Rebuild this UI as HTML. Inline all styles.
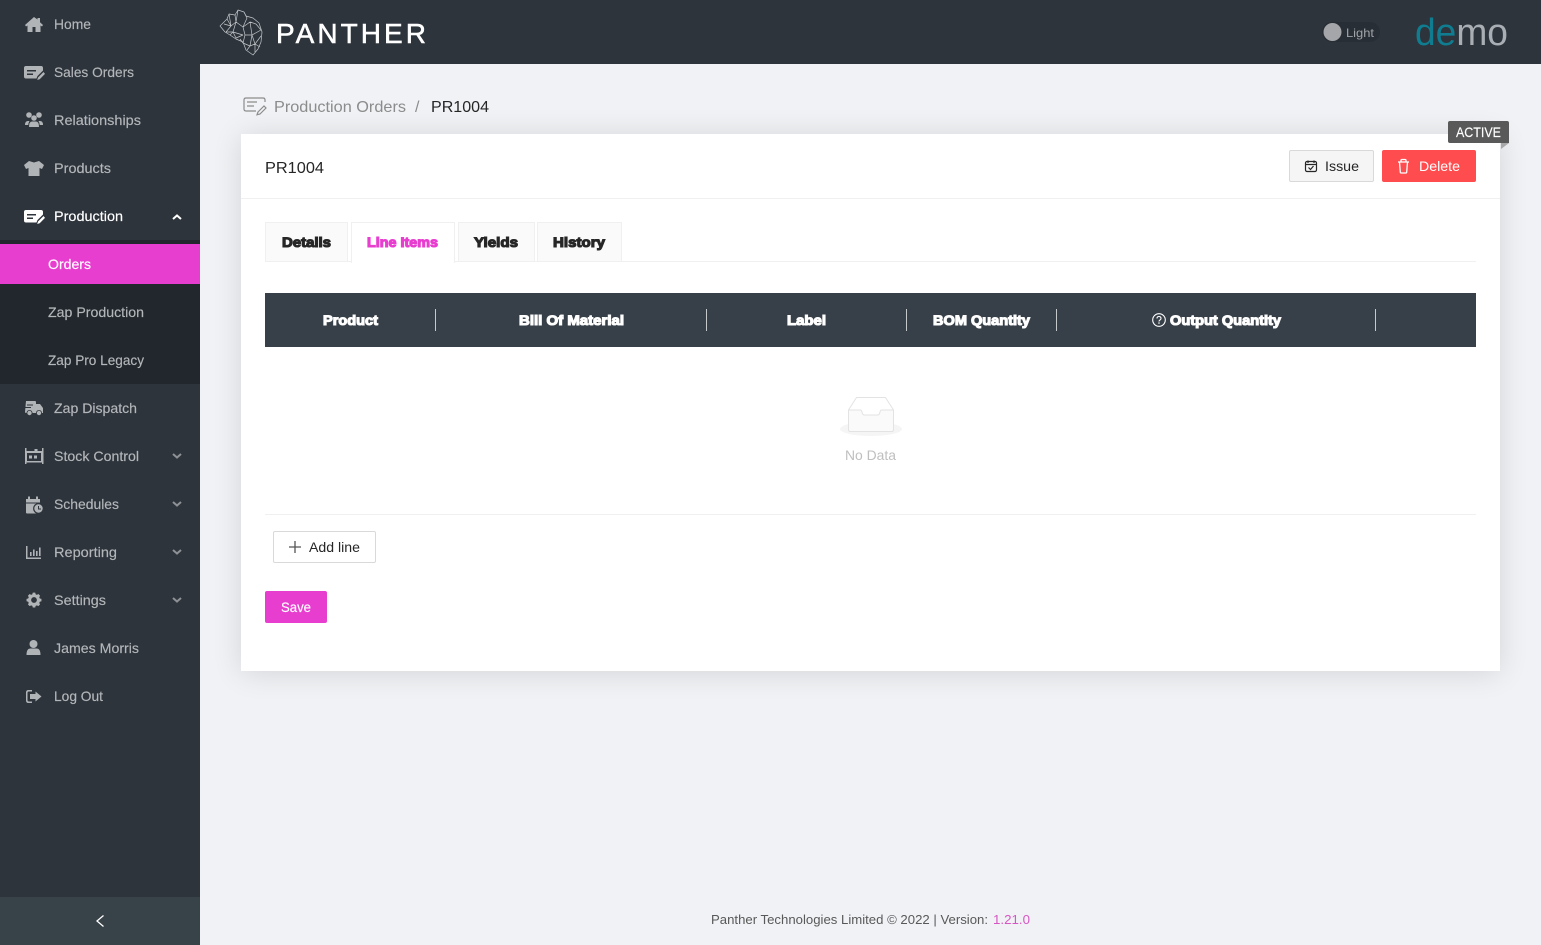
<!DOCTYPE html>
<html lang="en"><head><meta charset="utf-8"><title>PR1004</title>
<style>
html,body{margin:0;padding:0;width:1541px;height:945px;overflow:hidden;background:#f0f2f5;font-family:"Liberation Sans",sans-serif}
.a{position:absolute;box-sizing:border-box}
svg{position:absolute;left:0;top:0}
text{font-family:"Liberation Sans",sans-serif;font-size:14px}
.n{fill:#b4b7ba;stroke:#b4b7ba;stroke-width:.15px}
.h{font-weight:bold;stroke-width:1.1px;stroke:currentColor;paint-order:stroke}
</style></head><body>
<div class="a" style="left:0;top:0;width:200px;height:945px;background:#2d343c"></div>
<div class="a" style="left:0;top:240px;width:200px;height:144px;background:#21272d"></div>
<div class="a" style="left:0;top:244px;width:200px;height:40px;background:#e83ed0"></div>
<div class="a" style="left:0;top:897px;width:200px;height:48px;background:#384249"></div>
<div class="a" style="left:200px;top:0;width:1341px;height:64px;background:#2d343c"></div>
<div class="a" style="left:1322px;top:22px;width:58px;height:20px;border-radius:10px;background:#282e35"></div>
<div class="a" style="left:241px;top:134px;width:1259px;height:537px;background:#fff;box-shadow:0 2px 28px rgba(0,0,0,.12)"></div>
<div class="a" style="left:241px;top:198px;width:1259px;height:1px;background:#f0f0f0"></div>
<div class="a" style="left:1289px;top:150px;width:85px;height:32px;background:#f5f5f5;border:1px solid #d9d9d9;border-radius:2px"></div>
<div class="a" style="left:1382px;top:150px;width:94px;height:32px;background:#ff4d4f;border-radius:2px"></div>
<div class="a" style="left:1448px;top:121px;width:61px;height:22px;background:#595959;border-radius:2px 2px 0 2px"></div>
<div class="a" style="left:265px;top:261px;width:1211px;height:1px;background:#f0f0f0"></div>
<div class="a" style="left:265px;top:222px;width:83px;height:40px;background:#fafafa;border:1px solid #f0f0f0"></div>
<div class="a" style="left:351px;top:222px;width:104px;height:41px;background:#fff;border:1px solid #f0f0f0;border-bottom:0"></div>
<div class="a" style="left:458px;top:222px;width:77px;height:40px;background:#fafafa;border:1px solid #f0f0f0"></div>
<div class="a" style="left:537px;top:222px;width:85px;height:40px;background:#fafafa;border:1px solid #f0f0f0"></div>
<div class="a" style="left:265px;top:293px;width:1211px;height:54px;background:#374048"></div>
<div class="a" style="left:265px;top:514px;width:1211px;height:1px;background:#f0f0f0"></div>
<div class="a" style="left:273px;top:531px;width:103px;height:32px;background:#fff;border:1px solid #d9d9d9;border-radius:2px"></div>
<div class="a" style="left:265px;top:591px;width:62px;height:32px;background:#e83ed0;border-radius:2px"></div>
<svg width="1541" height="945" viewBox="0 0 1541 945" xmlns="http://www.w3.org/2000/svg">
<!-- Sidebar text -->
<text class="n" x="54" y="29" textLength="37" lengthAdjust="spacingAndGlyphs">Home</text>
<text class="n" x="54" y="77" textLength="80" lengthAdjust="spacingAndGlyphs">Sales Orders</text>
<text class="n" x="54" y="125" textLength="87" lengthAdjust="spacingAndGlyphs">Relationships</text>
<text class="n" x="54" y="173" textLength="57" lengthAdjust="spacingAndGlyphs">Products</text>
<text fill="#fff" stroke="#fff" stroke-width=".15" x="54" y="221" textLength="69" lengthAdjust="spacingAndGlyphs">Production</text>
<text fill="#fff" stroke="#fff" stroke-width=".15" x="48" y="269" textLength="43" lengthAdjust="spacingAndGlyphs">Orders</text>
<text class="n" x="48" y="317" textLength="96" lengthAdjust="spacingAndGlyphs">Zap Production</text>
<text class="n" x="48" y="365" textLength="96" lengthAdjust="spacingAndGlyphs">Zap Pro Legacy</text>
<text class="n" x="54" y="413" textLength="83" lengthAdjust="spacingAndGlyphs">Zap Dispatch</text>
<text class="n" x="54" y="461" textLength="85" lengthAdjust="spacingAndGlyphs">Stock Control</text>
<text class="n" x="54" y="509" textLength="65" lengthAdjust="spacingAndGlyphs">Schedules</text>
<text class="n" x="54" y="557" textLength="63" lengthAdjust="spacingAndGlyphs">Reporting</text>
<text class="n" x="54" y="605" textLength="52" lengthAdjust="spacingAndGlyphs">Settings</text>
<text class="n" x="54" y="653" textLength="85" lengthAdjust="spacingAndGlyphs">James Morris</text>
<text class="n" x="54" y="701" textLength="49" lengthAdjust="spacingAndGlyphs">Log Out</text>
<!-- Sidebar icons -->
<g fill="#b1b4b7">
<path d="M34 17l-9 8 1 1.500 1.500-1V32h5v-5h3v5h5v-6.500l1.500 1 1-1.500-3-2.700V18h-2.500v1.500z"/>
<path id="so" d="M26 66h15q2 0 2 2v2.500l-5.500 5.500-1 2.500H26q-2 0-2-2v-8.500q0-2 2-2zM27 70v1.500h9V70zM27 73.500V75h6v-1.500zM43.500 72l-5.500 5.500-.8 2.500 2.500-.8 5.300-5.300z" fill-rule="evenodd"/>
<circle cx="29" cy="115" r="2.800"/><circle cx="39" cy="115" r="2.800"/><circle cx="34" cy="118" r="2.800"/>
<path d="M25 125q0-4 3-4h1.500q-1 1.500-1.200 4zM43 125q0-4-3-4h-1.500q1 1.500 1.200 4zM29 127q0-5.500 3-5.500h4q3 0 3 5.500z"/>
<path d="M29 161l5 1.500 5-1.500 5 4-2 4-2.500-1v8H28.500v-8l-2.500 1-2-4z"/>
<path d="M26 401h9q1 0 1 1v2h4l3 4v5h-1a3 3 0 0 0-6 0h-3.500a3 3 0 0 0-6 0H26a1 1 0 0 1-1-1z"/><circle cx="29.500" cy="413" r="2.200"/><circle cx="39" cy="413" r="2.200"/>
<path fill="#2d343c" d="M27 404.500h6v1h-6zM25 407h6v1h-6z"/>
<path d="M25 448h1.500v3H42v-3h1.500v16H42v-1.500H26.500V464H25zM27 453v8h14v-8zM29 455.500h3v3h-3zM34 455.500h3v3h-3zM34.500 449h3v2h-3z" fill-rule="evenodd"/>
<path d="M26 499h2v-2.500h2V499h6v-2.500h2V499h2v3.500H26zM26 503.500h14V512a1.500 1.500 0 0 1-1.500 1.500H27a1 1 0 0 1-1-1z"/>
<circle cx="38.500" cy="508.500" r="5.400" fill="#2d343c"/><circle cx="38.500" cy="508.500" r="4.200"/>
<path d="M38.500 506v3h2.500" fill="none" stroke="#2d343c"/>
<path d="M26 546h1.500v11.500H41v1.500H26zM30 552h1.600v4H30zM33 549.500h1.600v6.500H33zM36 551h1.600v5H36zM39 547.500h1.600v8.500H39z"/>
<path transform="translate(34 600) scale(.82) translate(-34 -602)" fill-rule="evenodd" d="M32.500 593h3l.5 2 1.500.7 1.800-1 2.100 2.100-1 1.800.7 1.500 2 .5v3l-2 .5-.7 1.500 1 1.800-2.100 2.100-1.800-1-1.500.7-.5 2h-3l-.5-2-1.500-.7-1.800 1-2.100-2.100 1-1.800-.7-1.500-2-.5v-3l2-.5.7-1.500-1-1.800 2.100-2.100 1.800 1 1.500-.7zM34 598.500a3.500 3.500 0 1 0 .01 0z"/>
<circle cx="33.500" cy="644" r="4"/><path d="M26.500 655q0-6.500 4-6.500h6q4 0 4 6.500z"/>
<path d="M32 690h-3.500q-2.500 0-2.500 2.500v8q0 2.500 2.500 2.500H32v-1.500h-3q-1.500 0-1.500-1.500v-7q0-1.500 1.500-1.500h3zM35.500 691.500l6 5-6 5V699H30v-5h5.500z"/>
</g>
<use href="#so" y="144" style="fill:#fff"/>
<g fill="none" stroke="#8d9196" stroke-width="2">
<path d="M173 456l4 3.500 4-3.500M173 504l4 3.500 4-3.500M173 552l4 3.500 4-3.500M173 600l4 3.500 4-3.500" transform="translate(0 -2)"/>
</g>
<path d="M173 219l4-3.500 4 3.500" fill="none" stroke="#fff" stroke-width="2"/>
<path d="M103.500 915.500l-6.500 5.500 6.500 5.500" fill="none" stroke="#fff" stroke-width="1.300"/>
<!-- Logo -->
<g fill="none" stroke="#c4c7ca" stroke-width=".7" stroke-linejoin="round">
<path d="M220 26l7-7 2-5 6 1 3-5 6 2 2 4 7 2 6 5 3 9-1 10-3 7-5 6-7-5-3-8-7-3-6-4-5-3z"/>
<path d="M227 19l4 7 5-4-1-7M231 26l-5 6M236 22l7 5 4-9-3-6M243 27l7-5 6 2M250 22l2 13 9-5M243 27l2 8 7 0M245 35l-2 8 7 3 2-11M252 35l3 9 6-8M250 46l5-2 0 8M236 22l-3 10 10 3M233 32l-7 0M233 32l3 6 7-3M250 46l-3 4M229 14l2 12M238 10l-2 12M256 24l5 6M255 44l5 3M233 32l-3 3M243 43l-3-4M224 24l7 2M247 18l-4 9"/>
</g>
<text x="276" y="43" fill="#fff" stroke="#fff" stroke-width=".5" style="font-size:28px" textLength="150" lengthAdjust="spacing">PANTHER</text>
<!-- Toggle/demo -->
<circle cx="1332.500" cy="32" r="9" fill="#a4a6a9"/>
<text x="1346" y="37" fill="#a0a4a8" style="font-size:12px" textLength="28" lengthAdjust="spacingAndGlyphs">Light</text>
<text x="1415" y="45" style="font-size:38px" textLength="93" lengthAdjust="spacingAndGlyphs"><tspan fill="#0f7c90">de</tspan><tspan fill="#a8aeb3">mo</tspan></text>
<!-- Breadcrumb -->
<g fill="none" stroke="#8c8c8c" stroke-width="1.200">
<path d="M265 102v-2q0-2-2-2h-17q-2 0-2 2v9q0 2 2 2h10"/><path d="M247 102h10M247 106h7"/><path d="M258 112l6-6 2 2-6 6-3 .8z"/>
</g>
<text x="274" y="112" fill="#8c8c8c" style="font-size:16px" textLength="132" lengthAdjust="spacingAndGlyphs">Production Orders</text>
<text x="415" y="112" fill="#8c8c8c" style="font-size:16px">/</text>
<text x="431" y="112" fill="#262626" style="font-size:16px" textLength="58" lengthAdjust="spacingAndGlyphs">PR1004</text>
<text x="265" y="173" fill="#262626" style="font-size:16px" textLength="59" lengthAdjust="spacingAndGlyphs">PR1004</text>
<!-- Actions -->
<path d="M1501 143h8l-8 6z" fill="#a8a8a8"/>
<text x="1456" y="137" fill="#fff" stroke="#fff" stroke-width=".15" textLength="45" lengthAdjust="spacingAndGlyphs">ACTIVE</text>
<g fill="none" stroke="#262626" stroke-width="1.200">
<rect x="1305.500" y="161.500" width="11" height="10" rx="1.500"/><path d="M1306 164.500h10M1308 160.500v2.500M1314 160.500v2.500M1308.500 167.500l2 2 3-3.500"/>
</g>
<text x="1325" y="171" fill="#262626" textLength="34" lengthAdjust="spacingAndGlyphs">Issue</text>
<g fill="none" stroke="#fff" stroke-width="1.300">
<path d="M1398 162h11M1401 162v-1.500q0-1 1-1h3q1 0 1 1v1M1399.500 162l.8 10q0 1 1 1h4.400q1 0 1-1l.8-10"/>
</g>
<text x="1419" y="171" fill="#fff" textLength="41" lengthAdjust="spacingAndGlyphs">Delete</text>
<!-- Tabs -->
<g style="color:#262626" fill="#262626">
<text class="h" x="282" y="247" textLength="49" lengthAdjust="spacingAndGlyphs">Details</text>
<text class="h" x="474" y="247" textLength="44" lengthAdjust="spacingAndGlyphs">Yields</text>
<text class="h" x="553" y="247" textLength="52" lengthAdjust="spacingAndGlyphs">History</text>
</g>
<text class="h" style="color:#e83ed0" fill="#e83ed0" x="367" y="247" textLength="71" lengthAdjust="spacingAndGlyphs">Line Items</text>
<!-- Table header -->
<g style="color:#fff" fill="#fff">
<text class="h" x="323" y="325" textLength="55" lengthAdjust="spacingAndGlyphs">Product</text>
<text class="h" x="519" y="325" textLength="105" lengthAdjust="spacingAndGlyphs">Bill Of Material</text>
<text class="h" x="787" y="325" textLength="39" lengthAdjust="spacingAndGlyphs">Label</text>
<text class="h" x="933" y="325" textLength="97" lengthAdjust="spacingAndGlyphs">BOM Quantity</text>
<text class="h" x="1170" y="325" textLength="111" lengthAdjust="spacingAndGlyphs">Output Quantity</text>
</g>
<g stroke="#c6c9cb" stroke-width="1">
<path d="M435.500 309v22M706.500 309v22M906.500 309v22M1056.500 309v22M1375.500 309v22"/>
</g>
<g fill="none" stroke="#fff" stroke-width="1.100">
<circle cx="1159" cy="320" r="6.300"/><path d="M1157 318.500q0-2 2-2t2 2q0 1-1 1.500t-1 1.500"/>
</g>
<circle cx="1159" cy="323" r=".8" fill="#fff"/>
<!-- Empty -->
<ellipse cx="871" cy="429" rx="31" ry="7" fill="#f5f5f5"/>
<path d="M848.500 410l8-12.500h29l8 12.500v19.500q0 2-2 2h-41q-2 0-2-2z" fill="#fff" stroke="#e3e3e3"/>
<path d="M848.500 410h12q1 0 1.500 2 .5 3 2.500 3h13q2 0 2.500-3 .5-2 1.500-2h12v19.500q0 2-2 2h-41q-2 0-2-2z" fill="#fafafa" stroke="#e3e3e3"/>
<text x="845" y="460" fill="#bfbfbf" textLength="51" lengthAdjust="spacingAndGlyphs">No Data</text>
<!-- Buttons -->
<path d="M295 541v12M289 547h12" stroke="#555" stroke-width="1.300"/>
<text x="309" y="552" fill="#262626" textLength="51" lengthAdjust="spacingAndGlyphs">Add line</text>
<text x="281" y="612" fill="#fff" stroke="#fff" stroke-width=".15" textLength="30" lengthAdjust="spacingAndGlyphs">Save</text>
<!-- Footer -->
<text x="711" y="924" fill="#595959" style="font-size:13px" textLength="277" lengthAdjust="spacingAndGlyphs">Panther Technologies Limited © 2022 | Version:</text>
<text x="993" y="924" fill="#d756c4" style="font-size:13px" textLength="37" lengthAdjust="spacingAndGlyphs">1.21.0</text>
</svg>
</body></html>
